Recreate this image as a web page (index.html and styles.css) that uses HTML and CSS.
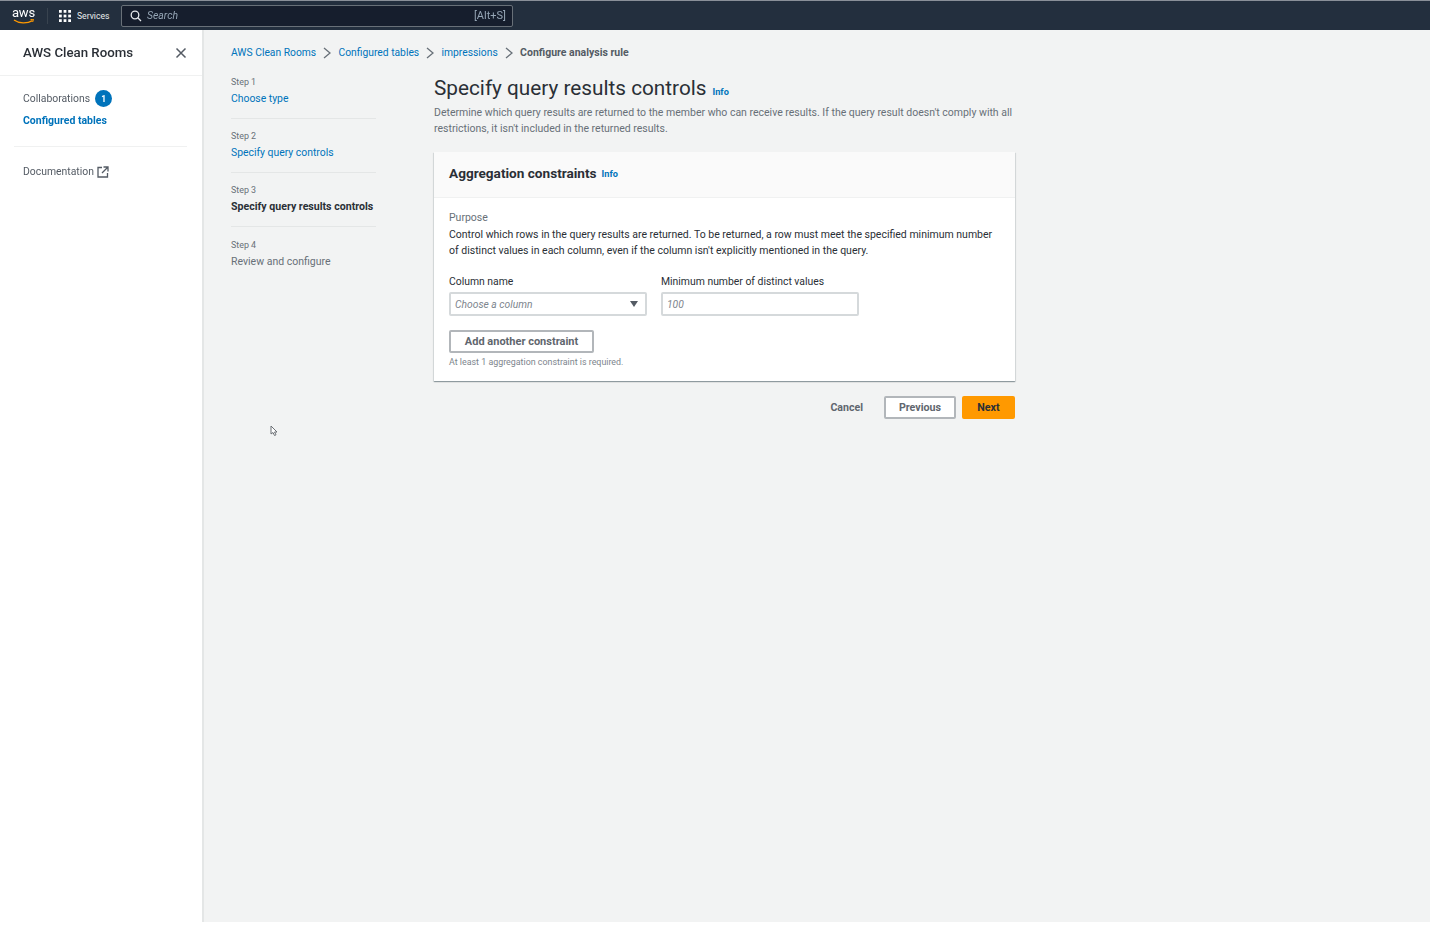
FILE: index.html
```html
<!DOCTYPE html>
<html lang="en">
<head>
<meta charset="utf-8">
<title>AWS Clean Rooms</title>
<link rel="stylesheet" href="styles.css">
</head>
<body>
<div class="page">
  <header class="topbar">
    <div class="logo">
      <span class="logo-text">aws</span>
      <svg class="logo-smile" width="22" height="6" viewBox="0 0 22 6"><path d="M1 1c5 3.600 13 3.800 18.500 .6" fill="none" stroke="#f90" stroke-width="1.300"/><path d="M17.500 .6l3-.4-.8 2.800" fill="none" stroke="#f90" stroke-width="1"/></svg>
    </div>
    <span class="logo-sep"></span>
    <svg class="grid-icon" width="12" height="12" viewBox="0 0 13 13" fill="#fff"><rect width="3" height="3"/><rect x="5" width="3" height="3"/><rect x="10" width="3" height="3"/><rect y="5" width="3" height="3"/><rect x="5" y="5" width="3" height="3"/><rect x="10" y="5" width="3" height="3"/><rect y="10" width="3" height="3"/><rect x="5" y="10" width="3" height="3"/><rect x="10" y="10" width="3" height="3"/></svg>
    <span class="services">Services</span>
    <div class="search">
      <svg width="12" height="12" viewBox="0 0 12 12" fill="none" stroke="#e6e9ec" stroke-width="1.300"><circle cx="5" cy="5" r="3.800"/><path d="M7.800 7.800L11 11"/></svg>
      <span class="search-text">Search</span>
      <span class="search-key">[Alt+S]</span>
    </div>
  </header>
  <div class="shell">
    <aside class="sidebar">
      <div class="side-head">
        <span class="side-title">AWS Clean Rooms</span>
        <svg width="12" height="12" viewBox="0 0 12 12" fill="none" stroke="#545b64" stroke-width="1.500"><path d="M1.500 1.500l9 9M10.500 1.500l-9 9"/></svg>
      </div>
      <nav class="side-nav">
        <div class="side-row"><span class="side-link">Collaborations</span><span class="badge">1</span></div>
        <div class="side-active">Configured tables</div>
      </nav>
      <div class="side-sep"></div>
      <div class="side-doc"><span class="side-link">Documentation</span>
        <svg width="12" height="12" viewBox="0 0 12 12" fill="none" stroke="#545b64" stroke-width="1.300"><path d="M5 1.500H1v9.500h9.500V7"/><path d="M6.500 1H11v4.500M11 1L5 7" /></svg>
      </div>
    </aside>
    <main class="main">
      <nav class="crumbs">
        <a class="link">AWS Clean Rooms</a>
        <svg class="chev" width="8" height="12" viewBox="0 0 8 12" fill="none" stroke="#687078" stroke-width="1.300"><path d="M1 1l6 5-6 5"/></svg>
        <a class="link">Configured tables</a>
        <svg class="chev" width="8" height="12" viewBox="0 0 8 12" fill="none" stroke="#687078" stroke-width="1.300"><path d="M1 1l6 5-6 5"/></svg>
        <a class="link">impressions</a>
        <svg class="chev" width="8" height="12" viewBox="0 0 8 12" fill="none" stroke="#687078" stroke-width="1.300"><path d="M1 1l6 5-6 5"/></svg>
        <span class="crumb-current">Configure analysis rule</span>
      </nav>
      <div class="wizard">
        <ol class="steps">
          <li class="step"><div class="step-num">Step 1</div><a class="step-link">Choose type</a></li>
          <li class="step"><div class="step-num">Step 2</div><a class="step-link">Specify query controls</a></li>
          <li class="step"><div class="step-num">Step 3</div><strong class="step-cur">Specify query results controls</strong></li>
          <li class="step last"><div class="step-num">Step 4</div><span class="step-off">Review and configure</span></li>
        </ol>
        <section class="content">
          <div class="title-row"><h1 class="title">Specify query results controls</h1><a class="info">Info</a></div>
          <p class="desc">Determine which query results are returned to the member who can receive results. If the query result doesn't comply with all restrictions, it isn't included in the returned results.</p>
          <div class="card">
            <div class="card-head"><h2 class="card-title">Aggregation constraints</h2><a class="info small">Info</a></div>
            <div class="card-body">
              <div class="purpose">Purpose</div>
              <p class="purpose-text">Control which rows in the query results are returned. To be returned, a row must meet the specified minimum number of distinct values in each column, even if the column isn't explicitly mentioned in the query.</p>
              <div class="fields">
                <div class="field">
                  <label class="label">Column name</label>
                  <div class="input"><span>Choose a column</span><svg width="8" height="6" viewBox="0 0 8 6" fill="#545b64"><path d="M0 0h8L4 6z"/></svg></div>
                </div>
                <div class="field">
                  <label class="label">Minimum number of distinct values</label>
                  <div class="input"><span>100</span></div>
                </div>
              </div>
              <button class="btn add">Add another constraint</button>
              <div class="hint">At least 1 aggregation constraint is required.</div>
            </div>
          </div>
          <div class="actions">
            <button class="btn-plain">Cancel</button>
            <button class="btn prev">Previous</button>
            <button class="btn primary">Next</button>
          </div>
        </section>
      </div>
      <svg class="cursor" width="8" height="12" viewBox="0 0 8 12" fill="#fff" stroke="#6b6f74" stroke-width="1"><path d="M1 1v8l2-1.500 1.500 3 1.500-.7-1.500-2.800H7z"/></svg>
    </main>
  </div>
</div>
</body>
</html>
```
FILE: styles.css
```css
* { box-sizing: border-box; }
html, body { margin: 0; padding: 0; background: #fff; }
body { font-family: Roboto, "Liberation Sans", sans-serif; font-size: 10.500px; color: #2a2f36; }
.page { height: 925px; overflow: hidden; filter: blur(0.7px); }
.topbar { height: 30px; background: #232f3e; border-top: 1px solid #8a9099; display: flex; align-items: center; padding-left: 12px; }
.logo { width: 23px; height: 20px; position: relative; flex: none; }
.logo-text { display: block; color: #fff; font-size: 13px; line-height: 14px; letter-spacing: -.2px; }
.logo-smile { position: absolute; left: 1px; top: 13px; }
.logo-sep { width: 1px; height: 16px; background: #38434f; margin: 0 11px 0 12px; }
.grid-icon { flex: none; margin-right: 6px; }
.services { color: #eaeded; font-size: 8.600px; width: 39px; }
.search { margin-left: 5px; width: 392px; height: 22px; background: #161e2d; border: 1px solid #687078; border-radius: 2px; display: flex; align-items: center; padding: 0 6px 0 8px; }
.search-text { margin-left: 5px; color: #95a5b5; font-style: italic; font-size: 10.400px; flex: 1; }
.search-key { color: #95a5b5; font-size: 11px; }
.shell { display: flex; height: 892px; }
.sidebar { width: 204px; background: #fff; border-right: 2px solid #e4e6e6; flex: none; }
.side-head { height: 46px; border-bottom: 1px solid #f0f1f1; padding: 0 15px 0 23px; display: flex; align-items: center; justify-content: space-between; }
.side-title { font-size: 13.250px; font-weight: 500; color: #2a2f36; }
.side-nav { padding: 14px 23px 0; }
.side-row { display: flex; align-items: center; gap: 5px; height: 17px; }
.side-link { color: #545b64; font-size: 10.400px; }
.badge { width: 17px; height: 17px; background: #0073bb; color: #fff; border-radius: 50%; font-size: 8.500px; font-weight: 700; display: flex; align-items: center; justify-content: center; }
.side-active { margin-top: 5px; color: #0073bb; font-weight: 700; font-size: 10.500px; line-height: 17px; }
.side-sep { margin: 17px 15px 0 14px; border-top: 1px solid #f0f1f1; }
.side-doc { margin: 18px 23px 0; display: flex; align-items: center; gap: 3px; }
.main { flex: 1; background: #f2f3f3; padding: 0 0 0 27px; position: relative; }
.crumbs { display: flex; align-items: center; height: 45px; padding-bottom: 0; }
.link { color: #0073bb; font-size: 10.300px; }
.chev { margin: 0 7.200px; flex: none; }
.crumb-current { color: #545b64; font-weight: 700; font-size: 10.500px; }
.wizard { display: flex; }
.steps { list-style: none; margin: 0; padding: 0; width: 145px; flex: none; }
.step { height: 44px; border-bottom: 1px solid #e4e6e6; margin-bottom: 10.200px; white-space: nowrap; }
.step.last { border: 0; }
.step-num { color: #687078; font-size: 8.900px; line-height: 14px; margin-bottom: 3px; }
.step-link { color: #0073bb; font-size: 10.400px; }
.step-cur { font-weight: 700; color: #2a2f36; font-size: 10.600px; }
.step-off { color: #687078; font-size: 10.500px; }
.content { margin-left: 58px; width: 581px; flex: none; margin-top: -4px; }
.title-row { display: flex; align-items: baseline; gap: 6px; height: 34px; }
.title { margin: 0; font-size: 20.750px; font-weight: 400; line-height: 34px; color: #2a2f36; }
.info { color: #0073bb; font-size: 9.200px; font-weight: 700; }
.desc { margin: 0; color: #687078; font-size: 10.500px; line-height: 16px; }
.card { margin-top: 15px; background: #fff; box-shadow: 0 1px 1px 0 rgba(0,28,36,.3), 1px 1px 1px 0 rgba(0,28,36,.08), -1px 1px 1px 0 rgba(0,28,36,.08); }
.card-head { height: 46px; background: #fafafa; border-bottom: 1px solid #f0f1f1; display: flex; align-items: center; gap: 5px; padding: 0 15px 3px; }
.card-title { margin: 0; font-size: 13.600px; font-weight: 700; color: #2a2f36; }
.card-body { padding: 12px 15px 12px; }
.purpose { color: #687078; font-size: 10.500px; line-height: 16px; }
.purpose-text { margin: 1px 0 0; color: #2a2f36; font-size: 10.500px; line-height: 16px; }
.fields { display: flex; gap: 14px; margin-top: 15px; }
.field { width: 198px; }
.label { display: block; color: #2a2f36; font-size: 10.400px; line-height: 16px; margin-bottom: 2px; }
.input { height: 24px; background: #fff; border: 2px solid #d5d9db; border-radius: 2px; display: flex; align-items: center; justify-content: space-between; padding: 0 7px 0 4px; color: #7d858d; font-style: italic; font-size: 10.300px; }
.btn { height: 23px; background: #fff; border: 2px solid #b2b6ba; border-radius: 2px; padding: 0 15px; font-family: inherit; font-size: 10.700px; font-weight: 700; color: #5f666e; }
.add { display: block; margin-top: 14px; width: 145px; padding: 0; font-size: 11px; }
.prev { width: 72px; padding: 0; }
.hint { margin-top: 2px; color: #7d858d; font-size: 8.900px; line-height: 14px; }
.actions { display: flex; justify-content: flex-end; align-items: center; gap: 6px; margin-top: 15px; }
.btn-plain { background: none; border: 0; padding: 0 15px; font-family: inherit; font-size: 10.600px; font-weight: 700; color: #5f666e; }
.primary { background: #ff9900; border-color: #ff9900; color: #2a2f36; width: 53px; padding: 0; }
.cursor { position: absolute; left: 66px; top: 395px; }
```
